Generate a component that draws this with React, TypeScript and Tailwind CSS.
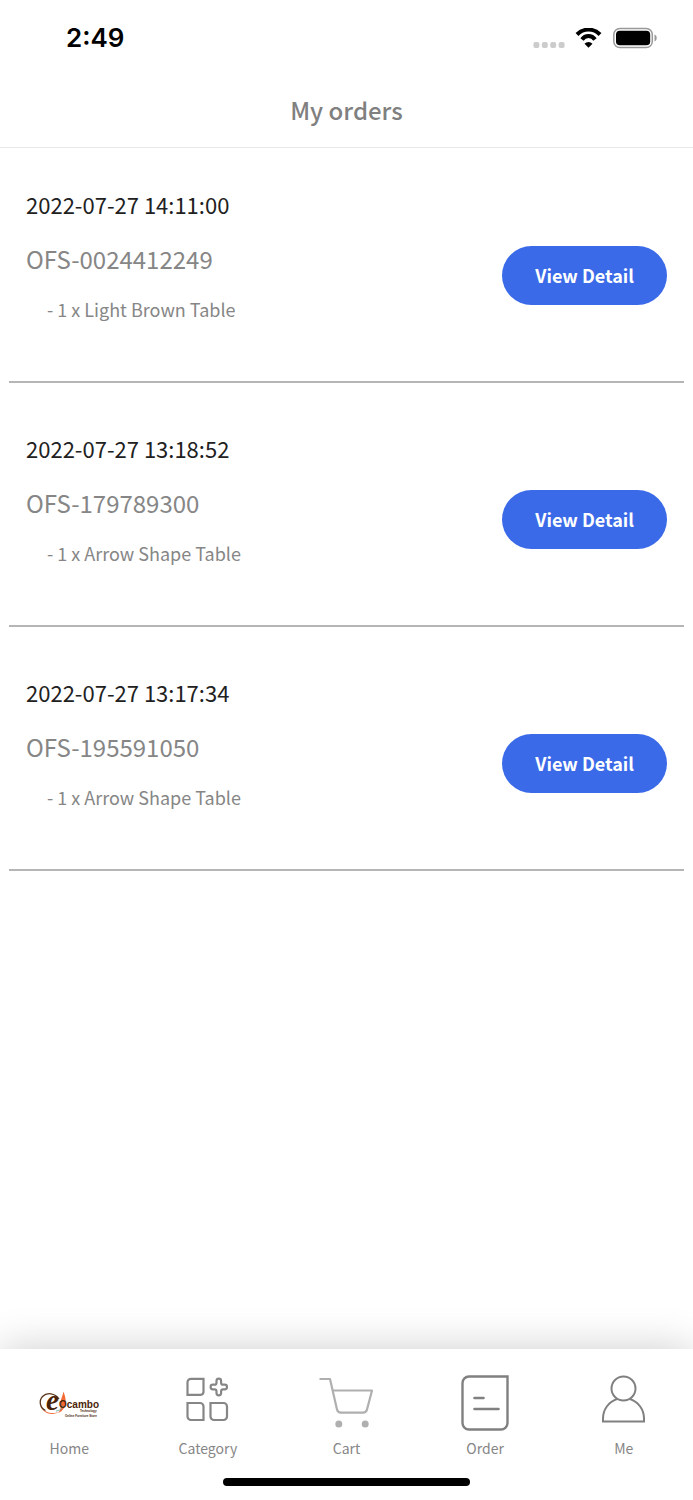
import React from 'react';

interface Order {
  id: string;
  date: string;
  items: { qty: number; name: string }[];
}

const orders: Order[] = [
  { id: 'OFS-0024412249', date: '2022-07-27 14:11:00', items: [{ qty: 1, name: 'Light Brown Table' }] },
  { id: 'OFS-179789300', date: '2022-07-27 13:18:52', items: [{ qty: 1, name: 'Arrow Shape Table' }] },
  { id: 'OFS-195591050', date: '2022-07-27 13:17:34', items: [{ qty: 1, name: 'Arrow Shape Table' }] },
];

const StatusBar: React.FC = () => (
  <div className="flex h-[76px] items-center justify-between pr-9 pl-[66px] text-black">
    <span className="font-['Inter',sans-serif] text-[26px] leading-8 font-semibold">2:49</span>
    <div className="flex items-center gap-[10px]">
      <svg className="mt-[14px]" width="32" height="6" viewBox="0 0 32 6" fill="#cccccc">
        <rect x="0.4" y="0" width="6" height="6" rx="2" />
        <rect x="8.8" y="0" width="6" height="6" rx="2" />
        <rect x="17.2" y="0" width="6" height="6" rx="2" />
        <rect x="25.6" y="0" width="6" height="6" rx="2" />
      </svg>
      <svg width="27" height="20" viewBox="0 0 27 20" fill="none" stroke="currentColor">
        <path d="M2 6.500a16 16 0 0 1 23 0" strokeWidth="4" />
        <path d="M7 11.500a7.900 7.900 0 0 1 13 0" strokeWidth="4" />
        <path d="M13.500 19.800l-4-4a5.600 5.600 0 0 1 8 0z" fill="currentColor" stroke="none" />
      </svg>
      <svg width="45" height="22" viewBox="0 0 45 22">
        <rect x="1.800" y="1.500" width="38.500" height="19" rx="6" fill="none" stroke="#999999" strokeWidth="1.500" />
        <rect x="4" y="3.800" width="34.200" height="14.400" rx="3.800" fill="#000000" />
        <path d="M42.500 7.500v7c1.400-.6 2.200-1.900 2.200-3.500s-.8-2.900-2.200-3.500z" fill="#999999" />
      </svg>
    </div>
  </div>
);

const OrderRow: React.FC<{ order: Order }> = ({ order }) => (
  <li className="flex h-[244px] items-center justify-between border-b-2 border-[#b5b5b5] px-[17px] pt-[30px]">
    <div className="self-start pt-[19px]">
      <p className="text-[22px] leading-8 text-[#212121]">{order.date}</p>
      <p className="mt-[23px] text-2xl leading-8 text-[#868686]">{order.id}</p>
      {order.items.map((item) => (
        <p key={item.name} className="mt-5 ml-[21px] text-lg leading-7 text-[#868686]">
          - {item.qty} x {item.name}
        </p>
      ))}
    </div>
    <button type="button" className="h-[59px] rounded-full bg-[#3a6ae8] px-[33px] text-lg font-bold text-white">
      View Detail
    </button>
  </li>
);

const HomeLogo = () => (
  <svg className="font-['Liberation_Sans',sans-serif] font-bold" width="64" height="56" viewBox="0 0 64 56" fill="#4a2408">
    <path d="M21 38c4-4 2-8 3-13 .5-3 2-5 2.400-8.500 1.500 4 2.600 7 2.200 11-.4 5-3 9-7.600 10.500z" fill="#f26a35" />
    <path d="M3.500 31c4 9 13 10 20 5-6 3.500-15 3-20-5z" fill="#f26a35" />
    <path d="M22 24C18 18 10 17 5.500 21.500 1.500 26 3 33 8.500 35.500" fill="none" stroke="#5a3418" strokeWidth="1.300" />
    <path d="M19 36c3 0 6-2 7-5" fill="none" stroke="#7cb9b0" />
    <text x="9" y="35" fontSize="29" fontStyle="italic" className="font-['Liberation_Serif',serif]">e</text>
    <text x="22" y="33" fontSize="10">Ocambo</text>
    <text x="43" y="37" fontSize="3">Technology</text>
    <text x="28" y="42" fontSize="3">Online Furniture Store</text>
  </svg>
);

const CategoryIcon = () => (
  <svg width="44" height="56" viewBox="0 0 44 56" fill="none" stroke="#868686" strokeWidth="2.200">
    <path d="M5 3.800H17.500v13a3 3 0 0 1-3 3H1.500V7.300a3.500 3.500 0 0 1 3.500-3.500z" />
    <path d="M1.500 28h12.500a3.500 3.500 0 0 1 3.500 3.500V45H5A3.500 3.500 0 0 1 1.500 41.500z" />
    <path d="M24.500 28h13a3.500 3.500 0 0 1 3.500 3.500v10a3.500 3.500 0 0 1-3.500 3.500h-9.500a3.500 3.500 0 0 1-3.500-3.500z" />
    <path d="M30.500 6a2.300 2.300 0 0 1 4.600 0v1.700a2 2 0 0 0 2 2H38.700a2.300 2.300 0 0 1 0 4.600h-1.600a2 2 0 0 0-2 2V18a2.300 2.300 0 0 1-4.600 0v-1.700a2 2 0 0 0-2-2h-1.600a2.300 2.300 0 0 1 0-4.600h1.600a2 2 0 0 0 2-2z" />
  </svg>
);

const CartIcon = () => (
  <svg width="56" height="56" viewBox="0 0 56 56" fill="none" stroke="#afafaf" strokeWidth="2.200">
    <path d="M1.500 4H12l7 30.500q.8 3.200 4 3.200h22q3.200 0 4-3.200L54 15.500H15" strokeLinejoin="round" />
    <circle cx="20.800" cy="49" r="3.500" fill="#afafaf" stroke="none" />
    <circle cx="47.200" cy="49" r="3.500" fill="#afafaf" stroke="none" />
  </svg>
);

const OrderIcon = () => (
  <svg width="48" height="56" viewBox="0 0 48 56" fill="none" stroke="#808080" strokeWidth="2.400">
    <path d="M8 1.500h38.500V48a6.500 6.500 0 0 1-6.500 6.500H8A6.500 6.500 0 0 1 1.500 48V8A6.500 6.500 0 0 1 8 1.500z" />
    <path d="M13.500 23h9M13.500 34h24" strokeLinecap="round" strokeWidth="2.600" />
  </svg>
);

const MeIcon = () => (
  <svg width="44" height="56" viewBox="0 0 44 56" fill="none" stroke="#808080" strokeWidth="2">
    <circle cx="21.500" cy="13.500" r="12" />
    <path d="M15 24C6.500 27 1 34.500 1 43.500v3h41v-3c0-9-5.500-16.500-14-19.500" />
  </svg>
);

const tabs = [
  { label: 'Home', Icon: HomeLogo },
  { label: 'Category', Icon: CategoryIcon },
  { label: 'Cart', Icon: CartIcon },
  { label: 'Order', Icon: OrderIcon },
  { label: 'Me', Icon: MeIcon },
];

export default function App() {
  return (
    <div className="flex min-h-screen flex-col bg-white font-['Noto_Sans_CJK_SC',sans-serif]">
      <header className="border-b border-[#e8e8e8]">
        <StatusBar />
        <h1 className="flex h-[71px] items-center justify-center pb-1 text-2xl font-medium text-[#808080]">My orders</h1>
      </header>

      <main className="flex-1 px-[9px]">
        <ul className="-mt-[9px]">
          {orders.map((order) => (
            <OrderRow key={order.id} order={order} />
          ))}
        </ul>
      </main>

      <nav className="bg-white shadow-[0_0_40px_rgba(0,0,0,0.2)]">
        <div className="grid h-[129px] grid-cols-5 pt-[26px]">
          {tabs.map(({ label, Icon }) => (
            <a key={label} href={`#${label.toLowerCase()}`} className="flex flex-col items-center gap-[7px] text-sm leading-5 text-[#868686]">
              <Icon />
              {label}
            </a>
          ))}
        </div>
        <div className="mx-auto mb-[14px] h-2 w-[247px] rounded-full bg-black" />
      </nav>
    </div>
  );
}
